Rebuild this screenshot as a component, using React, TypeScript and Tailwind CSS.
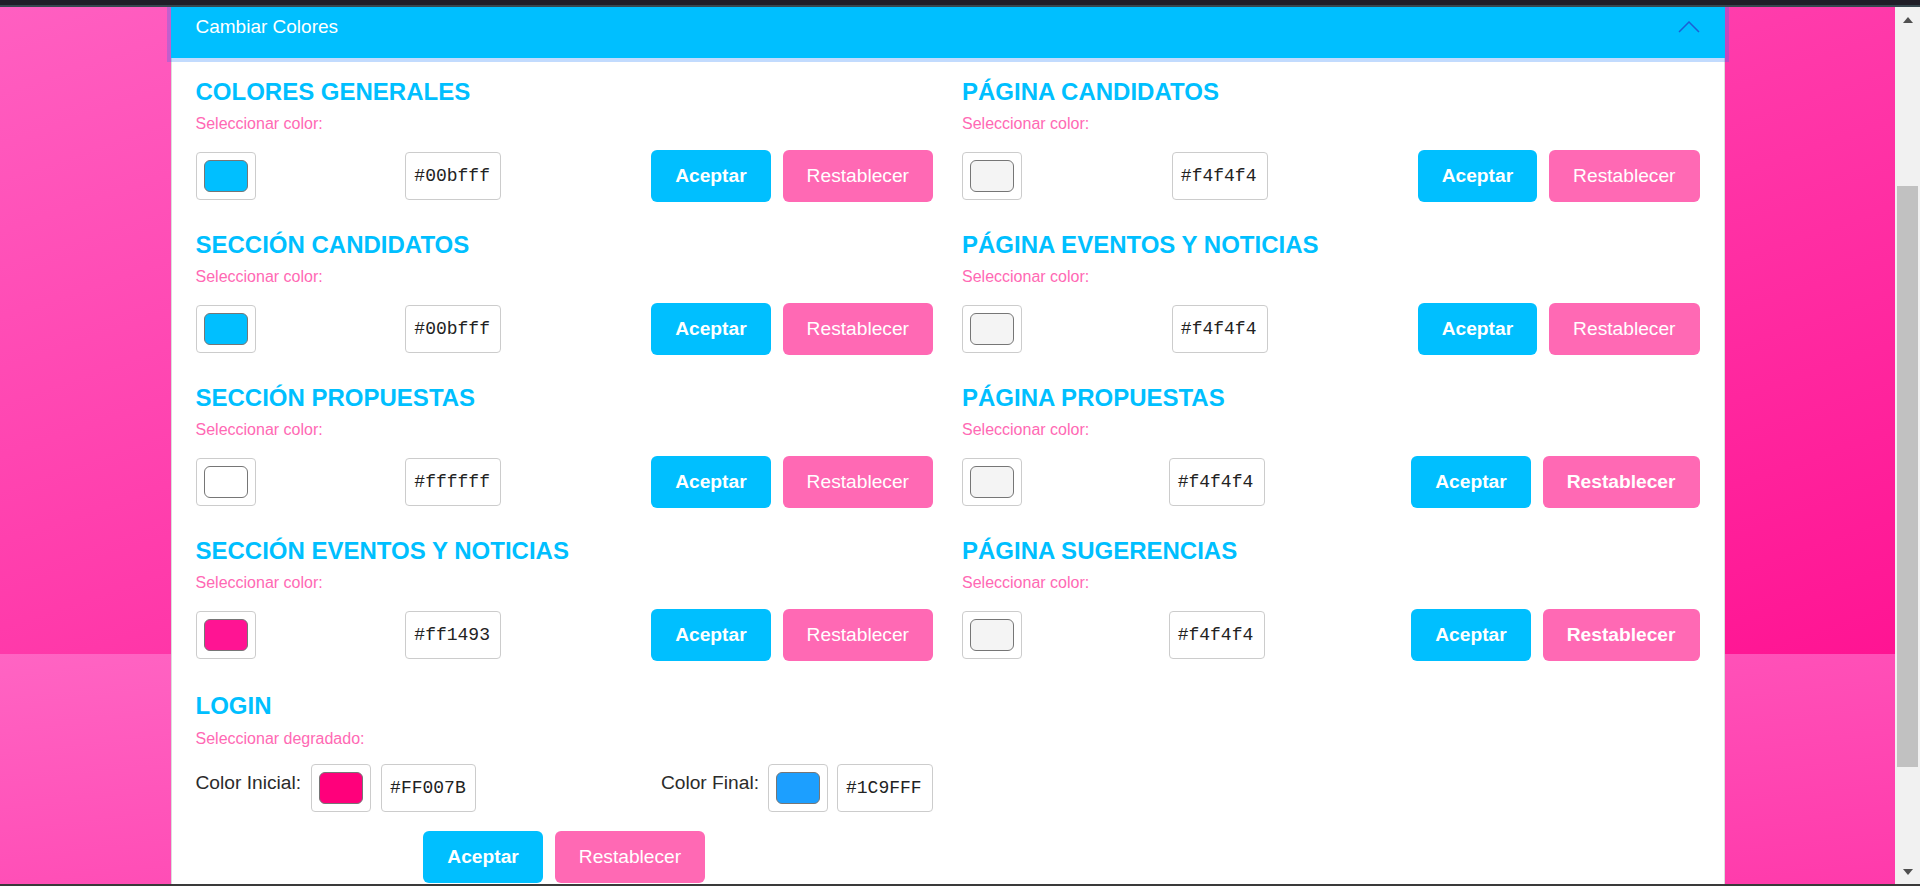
import React from "react";

type Item = { title: string; swatch: string; hex: string; bold?: boolean };

const left: Item[] = [
  { title: "COLORES GENERALES", swatch: "bg-[#00bfff]", hex: "#00bfff" },
  { title: "SECCIÓN CANDIDATOS", swatch: "bg-[#00bfff]", hex: "#00bfff" },
  { title: "SECCIÓN PROPUESTAS", swatch: "bg-[#ffffff]", hex: "#ffffff" },
  { title: "SECCIÓN EVENTOS Y NOTICIAS", swatch: "bg-[#ff1493]", hex: "#ff1493" },
];

const right: Item[] = [
  { title: "PÁGINA CANDIDATOS", swatch: "bg-[#f4f4f4]", hex: "#f4f4f4" },
  { title: "PÁGINA EVENTOS Y NOTICIAS", swatch: "bg-[#f4f4f4]", hex: "#f4f4f4" },
  { title: "PÁGINA PROPUESTAS", swatch: "bg-[#f4f4f4]", hex: "#f4f4f4", bold: true },
  { title: "PÁGINA SUGERENCIAS", swatch: "bg-[#f4f4f4]", hex: "#f4f4f4", bold: true },
];

function Swatch({ swatch }: { swatch: string }) {
  return (
    <div className="w-[60px] h-[48px] shrink-0 border border-[#cccccc] rounded-[4px] bg-white flex items-center justify-center">
      <div className={`w-[44px] h-[32px] rounded-[6px] border border-[#767676] ${swatch}`} />
    </div>
  );
}

function Hex({ hex, w = "w-[96px]" }: { hex: string; w?: string }) {
  return (
    <div
      className={`${w} h-[48px] shrink-0 border border-[#cccccc] rounded-[4px] bg-white flex items-center pl-[8px] font-['Liberation_Mono','Courier_New',monospace] text-[18px] text-[#222222]`}
    >
      {hex}
    </div>
  );
}

function Buttons({ bold }: { bold?: boolean }) {
  return (
    <div className="flex gap-[12px]">
      <button className="h-[52px] px-[24px] rounded-[6px] bg-[#00bfff] text-white font-bold text-[19.2px] leading-[22px]">
        Aceptar
      </button>
      <button
        className={`h-[52px] px-[24px] rounded-[6px] bg-[#ff69b4] text-white text-[19.2px] leading-[22px] ${bold ? "font-bold" : "font-normal"}`}
      >
        Restablecer
      </button>
    </div>
  );
}

function Title({ children }: { children: React.ReactNode }) {
  return <h3 className="text-[24px] leading-[28px] font-bold text-[#00bfff]">{children}</h3>;
}

function Label({ children, cls = "mt-[9px]" }: { children: React.ReactNode; cls?: string }) {
  return <p className={`${cls} text-[16px] leading-[18px] text-[#ff69b4]`}>{children}</p>;
}

function Section({ item }: { item: Item }) {
  return (
    <div>
      <Title>{item.title}</Title>
      <Label>Seleccionar color:</Label>
      <div className="mt-[17px] h-[52px] flex items-center justify-between">
        <Swatch swatch={item.swatch} />
        <Hex hex={item.hex} />
        <Buttons bold={item.bold} />
      </div>
    </div>
  );
}

export default function App() {
  return (
    <div className="w-[1920px] h-[886px] flex flex-col overflow-hidden font-['Liberation_Sans',Arial,sans-serif]">
      <div className="h-[5px] bg-[#201e28] shrink-0" />
      <div className="h-[2px] bg-[#37474f] shrink-0" />
      <div className="flex-1 min-h-0 flex">
        <main className="flex-1 min-w-0 overflow-hidden [background:linear-gradient(to_bottom_right,#ff5fc1,#ff1493)_top/100%_647px_no-repeat,linear-gradient(to_bottom_right,#ff64c3,#ff3aab)_bottom/100%_230px_no-repeat]">
          <div className="w-[1554px] h-full mx-auto bg-white border-x border-[#dcdcdc] flex flex-col">
            <div className="relative z-10 -mx-px h-[51px] shrink-0 bg-[#00bfff] shadow-[0_0_0_4px_rgba(13,110,253,0.25)] flex items-start justify-between pl-[25px] pr-[25px] pt-[6px]">
              <span className="text-white text-[19px] leading-[28px]">Cambiar Colores</span>
              <svg className="mt-[8px]" width="22" height="12" viewBox="0 0 22 12" fill="none">
                <polyline points="1,11 11,1 21,11" stroke="#1c5fd4" strokeWidth="1.5" fill="none" />
              </svg>
            </div>
            <div className="px-[24px] pt-[20px] grid grid-cols-2 gap-x-[29px] items-start">
              <div className="flex flex-col gap-[29px]">
                {left.map((it) => (
                  <Section key={it.title} item={it} />
                ))}
                <div className="mt-[2px]">
                  <Title>LOGIN</Title>
                  <Label cls="mt-[10px]">Seleccionar degradado:</Label>
                  <div className="mt-[16px] flex items-center justify-between">
                    <div className="flex items-center gap-[10px]">
                      <span className="mb-[10px] text-[19.2px] leading-[22px] text-[#2b2b2b]">Color Inicial:</span>
                      <Swatch swatch="bg-[#ff007b]" />
                      <Hex hex="#FF007B" w="w-[95px]" />
                    </div>
                    <div className="flex items-center gap-[9px]">
                      <span className="mb-[10px] text-[19.2px] leading-[22px] text-[#2b2b2b]">Color Final:</span>
                      <Swatch swatch="bg-[#1c9fff]" />
                      <Hex hex="#1C9FFF" />
                    </div>
                  </div>
                  <div className="mt-[19px] flex justify-center">
                    <Buttons />
                  </div>
                </div>
              </div>
              <div className="flex flex-col gap-[29px]">
                {right.map((it) => (
                  <Section key={it.title} item={it} />
                ))}
              </div>
            </div>
          </div>
        </main>
        <div className="w-[25px] shrink-0 bg-[#f1f1f1] flex flex-col items-center">
          <div className="mt-[10px] w-0 h-0 border-x-[5.5px] border-x-transparent border-b-[6px] border-b-[#505050]" />
          <div className="mt-[163px] h-[581px] w-[21px] bg-[#c1c1c1]" />
          <div className="flex-1" />
          <div className="mb-[9px] w-0 h-0 border-x-[5.5px] border-x-transparent border-t-[6px] border-t-[#505050]" />
        </div>
      </div>
      <div className="h-[2px] bg-[#3a3a3a] shrink-0" />
    </div>
  );
}
